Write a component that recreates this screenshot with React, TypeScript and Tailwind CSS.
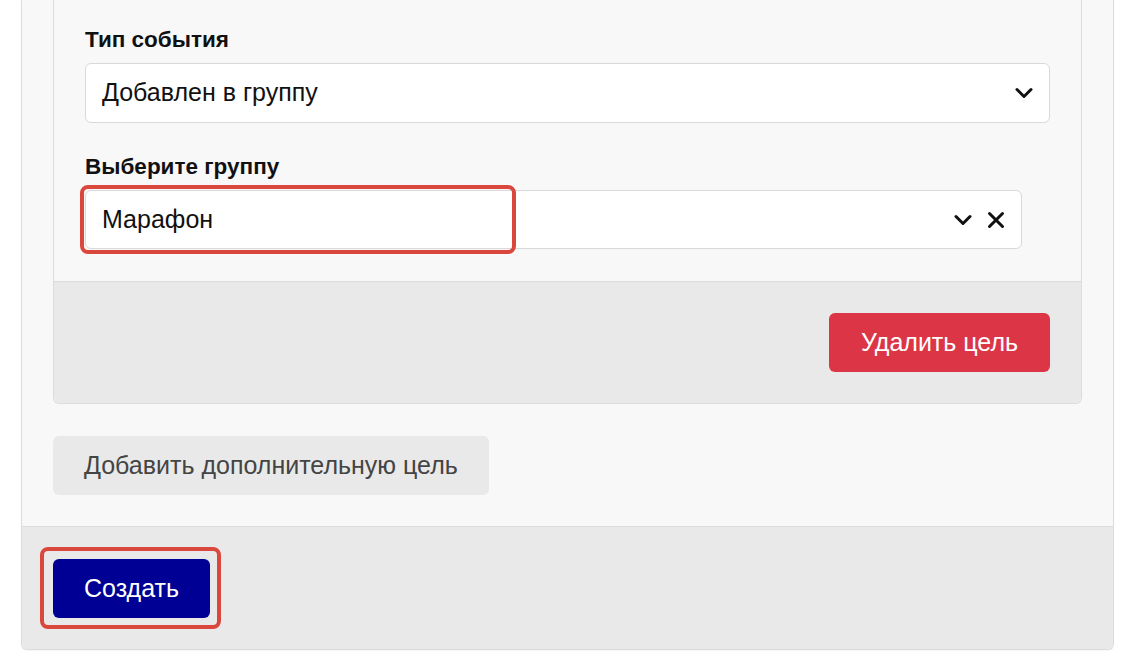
function Chevron() {
  return (
    <svg width="18" height="12" viewBox="0 0 18 12" fill="none">
      <path d="M2 2.5 L9 9.5 L16 2.5" stroke="#111" strokeWidth="3" strokeLinecap="round" strokeLinejoin="round" />
    </svg>
  )
}

function Cross() {
  return (
    <svg width="18" height="18" viewBox="0 0 18 18" fill="none">
      <path d="M2.5 2.5 L15.5 15.5 M15.5 2.5 L2.5 15.5" stroke="#111" strokeWidth="3" strokeLinecap="round" />
    </svg>
  )
}

export default function App() {
  return (
    <div className="min-h-screen bg-white px-[21px] font-['Liberation_Sans',Arial,sans-serif] text-[#111]">
      <div className="rounded-b-md border-x border-b border-[#dcdcdc] bg-[#f8f8f8] shadow-[0_1px_2px_rgba(0,0,0,0.04)]">
        <div className="px-[31px] pb-[31px]">
          <div className="rounded-b-md border-x border-b border-[#dcdcdc] bg-[#f8f8f8]">
            <div className="pl-[31px] pr-[31px] pt-[26px] pb-[32px]">
              <label className="block text-[22.5px] font-bold leading-[28px]">Тип события</label>
              <div className="mt-[9px] flex h-[60px] items-center justify-between rounded-md border border-[#d9d9d9] bg-white pl-[16px] pr-[16px]">
                <span className="text-[25px]">Добавлен в группу</span>
                <Chevron />
              </div>

              <label className="mt-[30px] block text-[22.5px] font-bold leading-[28px]">Выберите группу</label>
              <div className="relative mr-[28px] mt-[9px]">
                <div className="flex h-[59px] items-center justify-between rounded-md border border-[#d9d9d9] bg-white pl-[16px] pr-[16px]">
                  <span className="text-[25px]">Марафон</span>
                  <div className="flex items-center gap-[15px]">
                    <Chevron />
                    <Cross />
                  </div>
                </div>
                <div className="absolute left-[-5px] top-[-5px] h-[69px] w-[436px] rounded-lg border-4 border-[#d9473d]" />
              </div>
            </div>
            <div className="flex justify-end rounded-b-md border-t border-[#dcdcdc] bg-[#e9e9e9] pb-[31px] pr-[31px] pt-[31px]">
              <button className="h-[59px] rounded-md bg-[#dc3545] px-[32px] text-[25px] text-white">Удалить цель</button>
            </div>
          </div>

          <button className="mt-[32px] h-[59px] rounded-md bg-[#e9e9e9] px-[31px] text-[25px] text-[#444]">
            Добавить дополнительную цель
          </button>
        </div>

        <div className="rounded-b-md border-t border-[#dcdcdc] bg-[#e9e9e9] pb-[31px] pl-[31px] pt-[32px]">
          <div className="relative w-fit">
            <button className="h-[59px] rounded-md bg-[#000094] px-[31px] text-[25px] text-white">Создать</button>
            <div className="absolute left-[-13px] top-[-12px] h-[82px] w-[181px] rounded-lg border-4 border-[#d9473d]" />
          </div>
        </div>
      </div>
    </div>
  )
}
